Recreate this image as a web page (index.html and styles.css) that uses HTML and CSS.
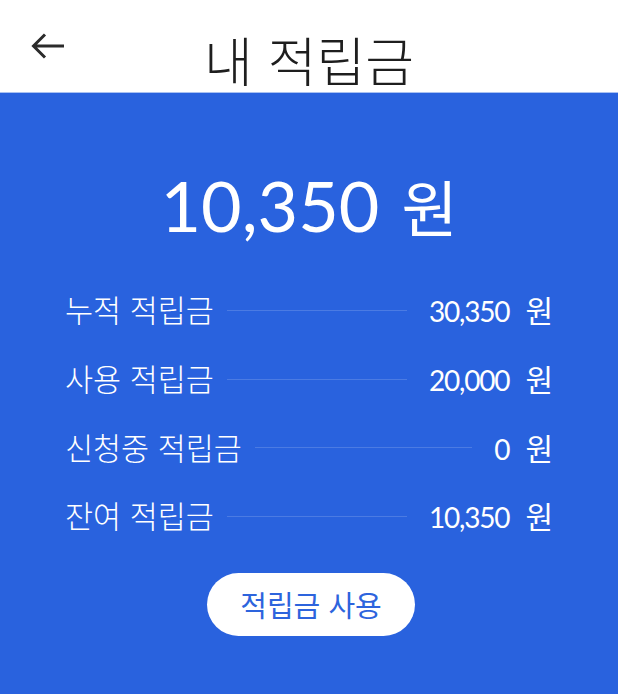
FILE: index.html
```html
<!DOCTYPE html>
<html lang="ko">
<head>
<meta charset="utf-8">
<title>내 적립금</title>
<link rel="stylesheet" href="styles.css">
</head>
<body>
<header class="topbar">
  <div class="back">
    <svg width="36" height="30" viewBox="0 0 36 30" aria-hidden="true">
      <path d="M34 15H4M15 3.5L3.5 15L15 26.5" fill="none" stroke="#2b2b2b" stroke-width="3" stroke-linecap="butt" stroke-linejoin="miter"/>
    </svg>
  </div>
  <h1 class="title">내 적립금</h1>
  <div class="spacer"></div>
</header>
<main class="panel">
  <div class="total"><span class="num">10,350</span><span class="unit">원</span></div>
  <ul class="rows">
    <li class="row"><span class="label">누적 적립금</span><span class="rule"></span><span class="value"><span class="num">30,350</span><span class="unit">원</span></span></li>
    <li class="row"><span class="label">사용 적립금</span><span class="rule"></span><span class="value"><span class="num">20,000</span><span class="unit">원</span></span></li>
    <li class="row"><span class="label">신청중 적립금</span><span class="rule"></span><span class="value"><span class="num">0</span><span class="unit">원</span></span></li>
    <li class="row"><span class="label">잔여 적립금</span><span class="rule"></span><span class="value"><span class="num">10,350</span><span class="unit">원</span></span></li>
  </ul>
  <div class="actions"><button class="use" type="button">적립금 사용</button></div>
</main>
</body>
</html>
```
FILE: styles.css
```css
html, body {
  margin: 0;
  padding: 0;
  height: 100%;
}
body {
  display: flex;
  flex-direction: column;
  background: #2962de;
  font-family: "Noto Sans CJK KR", "Noto Sans", sans-serif;
}
.topbar {
  flex: none;
  height: 92px;
  background: #ffffff;
  border-bottom: 1px solid #a9c1f2;
  display: grid;
  grid-template-columns: 1fr auto 1fr;
  align-items: start;
}
.back {
  padding: 31px 0 0 30px;
  line-height: 0;
}
.title {
  margin: 0;
  padding-top: 33px;
  font-size: 53px;
  font-weight: 300;
  line-height: 1;
  color: #1e1e1e;
  white-space: nowrap;
}
.panel {
  flex: 1;
  background: #2962de;
  color: #ffffff;
  padding: 74px 65px 0;
}
.num {
  font-family: Lato, "Noto Sans", sans-serif;
}
.total {
  text-align: center;
  font-size: 70px;
  line-height: 1;
}
.total .unit {
  margin-left: 22px;
  font-size: 61px;
  font-weight: 400;
}
.rows {
  list-style: none;
  margin: 35px 0 0;
  padding: 0;
}
.row {
  height: 68.7px;
  display: flex;
  align-items: center;
}
.label {
  font-size: 30.5px;
  font-weight: 300;
  white-space: nowrap;
}
.rule {
  flex: 1;
  height: 1px;
  margin: 2px 22px 0 13px;
  background: rgba(255, 255, 255, 0.16);
}
.value {
  font-size: 30px;
  white-space: nowrap;
}
.value .num {
  font-size: 28px;
  letter-spacing: -1.2px;
}
.value .unit {
  margin-left: 16px;
  font-weight: 400;
}
.actions {
  display: flex;
  justify-content: center;
  margin-top: 23px;
}
.use {
  width: 208px;
  height: 63px;
  border: none;
  border-radius: 32px;
  background: #ffffff;
  color: #2d64dd;
  font-family: "Noto Sans CJK KR", "Noto Sans", sans-serif;
  font-size: 29px;
  font-weight: 400;
  padding: 0;
  margin-left: 4px;
}
```
